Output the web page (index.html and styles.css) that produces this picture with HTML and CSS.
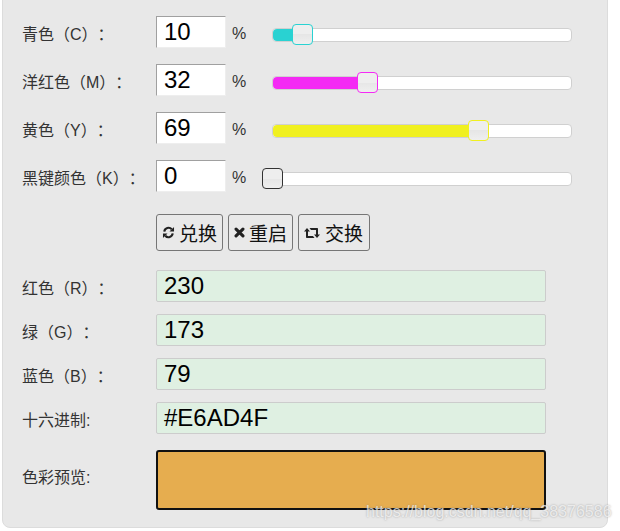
FILE: index.html
```html
<!DOCTYPE html>
<html>
<head>
    <title>CMYK</title>
    <link rel="stylesheet" href="styles.css">
</head>
<body>
    <div class="panel">
        <div class="row">
            <label class="label">青色（C）：</label>
            <div class="num">10</div>
            <span class="pct">%</span>
            <div class="track">
                <div class="fill cyan" style="width: 10%"></div>
                <div class="handle h-cyan" style="left: 10%"></div>
            </div>
        </div>
        <div class="row">
            <label class="label">洋红色（M）：</label>
            <div class="num">32</div>
            <span class="pct">%</span>
            <div class="track">
                <div class="fill magenta" style="width: 32%"></div>
                <div class="handle h-magenta" style="left: 32%"></div>
            </div>
        </div>
        <div class="row">
            <label class="label">黄色（Y）：</label>
            <div class="num">69</div>
            <span class="pct">%</span>
            <div class="track">
                <div class="fill yellow" style="width: 69%"></div>
                <div class="handle h-yellow" style="left: 69%"></div>
            </div>
        </div>
        <div class="row">
            <label class="label">黑键颜色（K）：</label>
            <div class="num">0</div>
            <span class="pct">%</span>
            <div class="track">
                <div class="handle h-black" style="left: 0%"></div>
            </div>
        </div>

        <div class="buttons">
            <button type="button" class="btn btn-convert">
                <svg class="icon icon-refresh" viewBox="0 0 16 16">
                    <path class="arc" d="M2.800 6.800A5.300 5.300 0 0 1 12 4M13.200 9.200A5.300 5.300 0 0 1 4 12"/>
                    <path d="M14.800 1.200V6.800H9.200zM1.200 14.800V9.200H6.800z"/>
                </svg>兑换
            </button>
            <button type="button" class="btn btn-reset">
                <svg class="icon icon-times" viewBox="0 0 16 16">
                    <path class="cross" d="M3 3 13 13M13 3 3 13"/>
                </svg>重启
            </button>
            <button type="button" class="btn btn-swap">
                <svg class="icon icon-retweet" viewBox="0 0 16 12">
                    <path d="M3 1 6 4.500H4V9H9L10.500 11H2.700Q2 11 2 10.300V4.500H0zM13 11 10 7.500H12V3H7L5.500 1H13.300Q14 1 14 1.700V7.500H16z"/>
                </svg>交换
            </button>
        </div>

        <div class="row-out">
            <label class="label">红色（R）：</label>
            <div class="out">230</div>
        </div>
        <div class="row-out">
            <label class="label">绿（G）：</label>
            <div class="out">173</div>
        </div>
        <div class="row-out">
            <label class="label">蓝色（B）：</label>
            <div class="out">79</div>
        </div>
        <div class="row-out">
            <label class="label">十六进制:</label>
            <div class="out">#E6AD4F</div>
        </div>
        <div class="row-preview">
            <label class="label">色彩预览:</label>
            <div class="preview"></div>
        </div>
    </div>
    <div class="watermark">https://blog.csdn.net/qq_38376586</div>
</body>
</html>
```

FILE: styles.css
```css
* {
    margin: 0;
    padding: 0;
    box-sizing: border-box;
}

body {
    font-family: "Liberation Sans", "Noto Sans CJK SC", sans-serif;
    text-spacing-trim: space-all;
    color: #333;
    background: white;
    width: 620px;
    height: 531px;
    overflow: hidden;
    position: relative;
}

.panel {
    width: 606px;
    height: 529px;
    margin-left: 2px;
    margin-top: -1px;
    padding: 16px 0 0 19px;
    background: #e8e8e8;
    border: 1px solid #dcdcdc;
    border-radius: 0 0 8px 8px;
}

.row {
    display: flex;
    align-items: center;
    height: 32px;
    margin-bottom: 16px;
}

.label {
    width: 134px;
    flex-shrink: 0;
    margin-top: 2px;
    font-size: 16px;
    white-space: nowrap;
}

.num {
    width: 70px;
    height: 32px;
    padding-left: 7px;
    font-size: 24px;
    line-height: 29px;
    color: #000;
    background: white;
    border-style: solid;
    border-width: 1px;
    border-color: #a0a0a0 #eee #eee #a0a0a0;
}

.pct {
    width: 46px;
    margin-top: 4px;
    padding-left: 6px;
    font-size: 16px;
}

.track {
    position: relative;
    width: 300px;
    height: 14px;
    margin-top: 6px;
    background: white;
    border: 1px solid #d0d0d0;
    border-radius: 4px;
}

.fill {
    height: 100%;
    border-radius: 4px 0 0 4px;
}

.cyan { background: #29d2d2; }
.magenta { background: #f42af4; }
.yellow { background: #f0f020; }

.handle {
    position: absolute;
    top: -5px;
    margin-left: -11px;
    width: 21px;
    height: 21px;
    border: 1px solid #333;
    border-radius: 4px;
    background: linear-gradient(#eee 50%, #e6e6e6 50%, #efefef);
}

.h-cyan { border-color: #29d2d2; }
.h-magenta { border-color: #f42af4; }
.h-yellow { border-color: #f0f020; }
.h-black { border-color: #333; }

.buttons {
    display: flex;
    gap: 5px;
    margin: 22px 0 19px 134px;
}

.btn {
    display: flex;
    align-items: center;
    height: 37px;
    padding-left: 5px;
    font-family: inherit;
    font-size: 19px;
    color: #111;
    background: #e9e9e9;
    border: 1px solid #767676;
    border-radius: 3px;
}

.btn-convert { width: 67px; }
.btn-reset { width: 65px; }
.btn-swap { width: 72px; }

.icon {
    flex-shrink: 0;
    fill: #222;
}

.icon-refresh {
    width: 13px;
    height: 13px;
    margin-right: 4px;
}

.icon-times {
    width: 11px;
    height: 11px;
    margin-right: 4px;
}

.icon-retweet {
    width: 16px;
    height: 12px;
    margin-right: 5px;
}

.arc {
    fill: none;
    stroke: #222;
    stroke-width: 2.6;
}

.cross {
    fill: none;
    stroke: #222;
    stroke-width: 4.5;
    stroke-linecap: round;
}

.row-out {
    display: flex;
    align-items: center;
    height: 32px;
    margin-bottom: 12px;
}

.out {
    width: 390px;
    height: 32px;
    padding-left: 7px;
    font-size: 24px;
    line-height: 29px;
    color: #000;
    background: #dff0e2;
    border: 1px solid #ccc;
    border-radius: 2px;
}

.row-preview {
    display: flex;
    align-items: center;
    margin-top: 16px;
}

.row-preview .label {
    margin-top: -9px;
}

.preview {
    width: 390px;
    height: 60px;
    background: #e6ad4f;
    border: 2px solid #111;
    border-radius: 3px;
}

.watermark {
    position: absolute;
    left: 366px;
    top: 503px;
    font-size: 16px;
    color: rgba(255, 255, 255, 0.7);
    text-shadow: 0 0 2px rgba(110, 110, 110, 0.6);
    white-space: nowrap;
}
```
